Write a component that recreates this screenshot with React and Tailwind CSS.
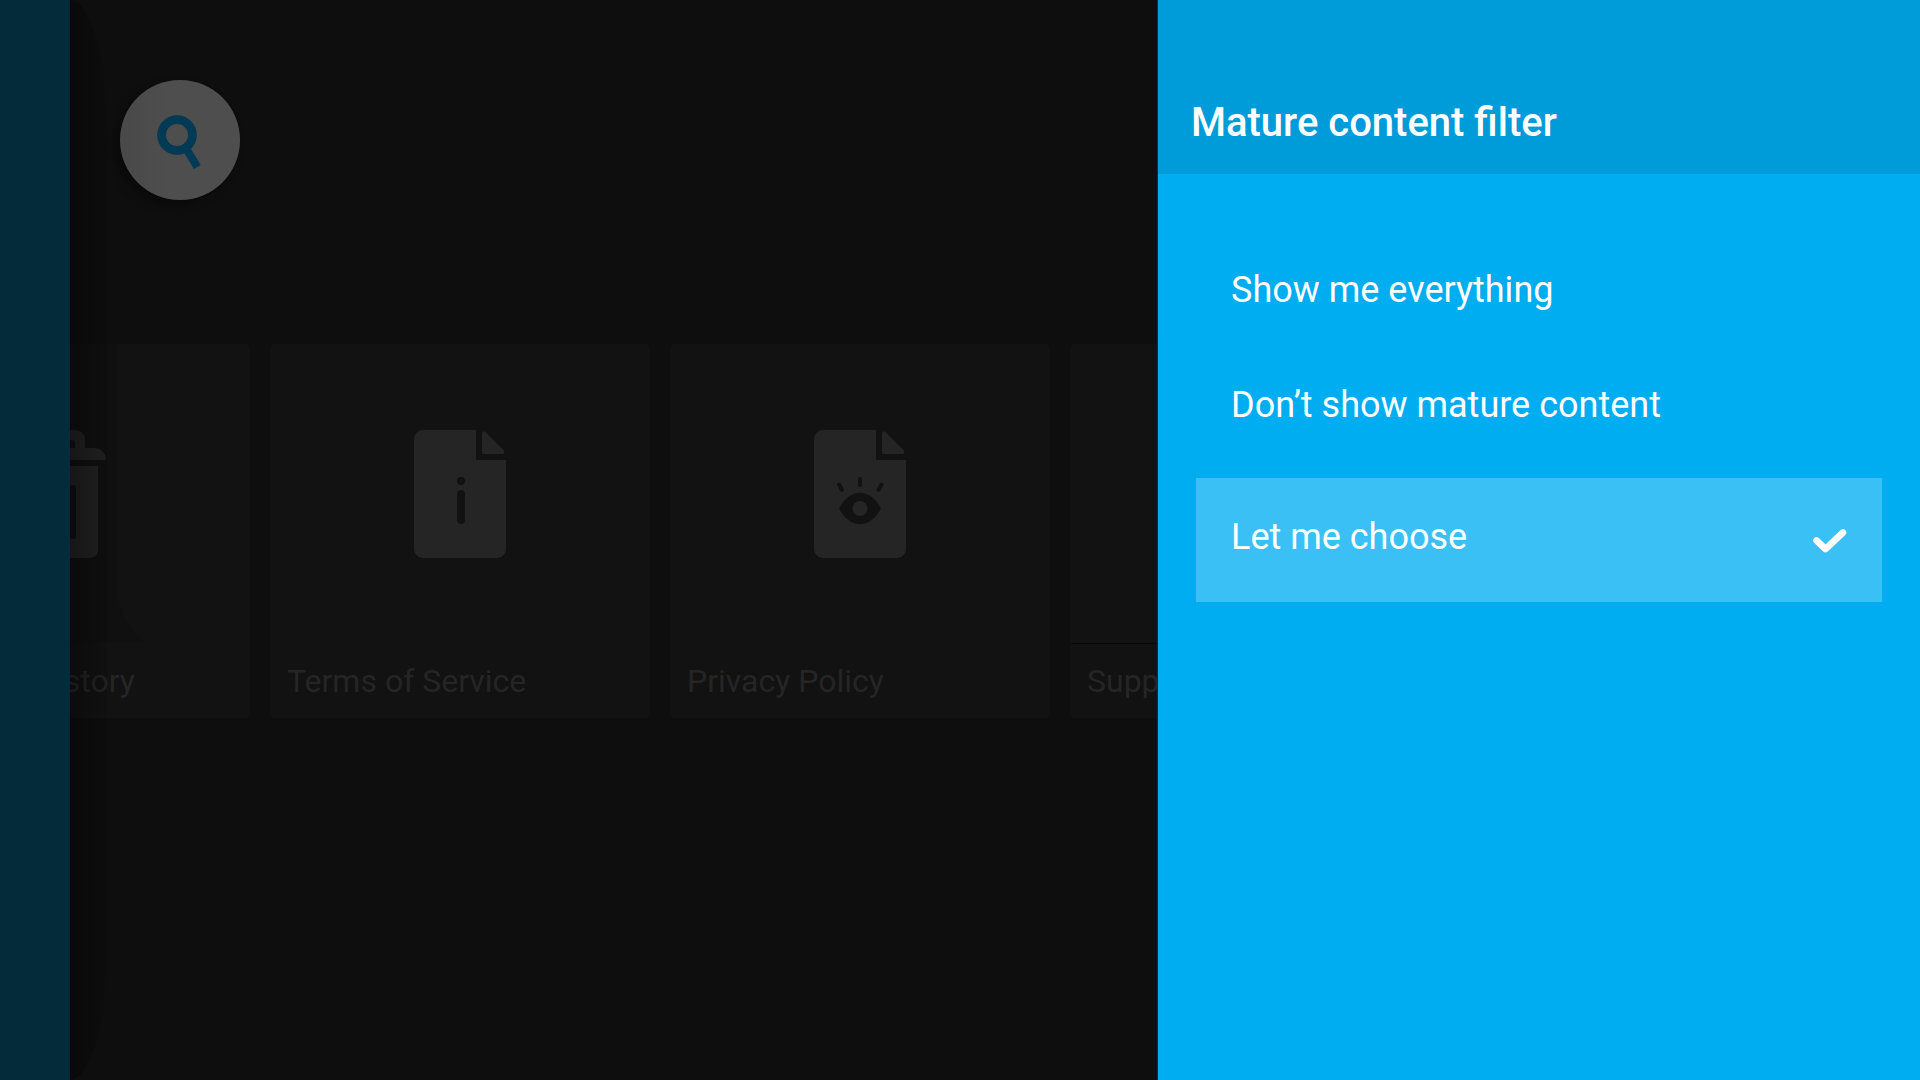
import { useState } from "react";

function SearchIcon() {
  return (
    <svg viewBox="0 0 120 120" className="size-full" aria-hidden="true">
      <circle cx="57" cy="55" r="15.4" fill="none" stroke="#003a54" strokeWidth="8.8" />
      <path d="M65.5 67.5 77.3 87" stroke="#003a54" strokeWidth="8" fill="none" />
    </svg>
  );
}

function TrashIcon() {
  return (
    <svg viewBox="0 0 92 128" className="h-32 w-[92px]" fill="#252525" aria-hidden="true">
      <path
        fillRule="evenodd"
        d="M0 30C0 23 5 18 12 18H21V9A9 9 0 0 1 30 0H62A9 9 0 0 1 71 9V18H80C87 18 92 23 92 30ZM31 18H61V13A3 3 0 0 0 58 10H34A3 3 0 0 0 31 13Z"
      />
      <path
        fillRule="evenodd"
        d="M8 36H84V120A8 8 0 0 1 76 128H16A8 8 0 0 1 8 120ZM24 58V106A3 3 0 0 0 30 106V58A3 3 0 0 0 24 58ZM56 58V106A3 3 0 0 0 62 106V58A3 3 0 0 0 56 58Z"
      />
    </svg>
  );
}

function DocumentIcon({ children }) {
  return (
    <svg viewBox="0 0 92 128" className="h-32 w-[92px]" fill="#252525" aria-hidden="true">
      <path d="M9 0H62V28.5Q62 30 63.5 30H92V119A9 9 0 0 1 83 128H9A9 9 0 0 1 0 119V9A9 9 0 0 1 9 0Z" />
      <path d="M68 4Q68 0 71.5 2L89.5 20Q91.5 24 88 24H70Q68 24 68 22Z" />
      {children}
    </svg>
  );
}

function InfoIcon() {
  return (
    <DocumentIcon>
      <circle cx="47" cy="51" r="4" fill="#121212" />
      <rect x="43" y="60" width="8" height="34" rx="4" fill="#121212" />
    </DocumentIcon>
  );
}

function EyeIcon() {
  return (
    <DocumentIcon>
      <path d="M25 78.5C36 57.5 56 57.5 67 78.5C56 99.5 36 99.5 25 78.5Z" fill="#121212" />
      <circle cx="46" cy="78.5" r="7.5" fill="#252525" />
      <path
        d="M46 49V55M25 54.5 28 60M67.5 54.5 64.5 60"
        stroke="#121212"
        strokeWidth="4"
        strokeLinecap="round"
      />
    </DocumentIcon>
  );
}

function CheckIcon() {
  return (
    <svg viewBox="0 0 34 24" className="mt-2 h-6 w-[34px]" fill="none" aria-hidden="true">
      <path d="M3.5 11.5 12.5 20 30 3.5" stroke="#fff" strokeWidth="6.6" strokeLinecap="round" strokeLinejoin="round" />
    </svg>
  );
}

function Card({ icon, label, className = "", dividerClass = "border-transparent", labelClass = "" }) {
  return (
    <button
      type="button"
      className={`flex w-[380px] shrink-0 flex-col rounded-[5px] bg-[#121212] text-left ${className}`}
    >
      <span className={`flex h-[300px] w-full items-center justify-center border-b ${dividerClass}`}>{icon}</span>
      <span className={`block px-[17px] py-[18px] text-[32px] leading-[38px] whitespace-nowrap text-[#252525] ${labelClass}`}>
        {label}
      </span>
    </button>
  );
}

const options = ["Show me everything", "Don’t show mature content", "Let me choose"];

function FilterPanel() {
  const [choice, setChoice] = useState("Let me choose");
  return (
    <aside className="w-[763px] shrink-0 border-l border-[#1f2b30] bg-[#00adf0] text-white">
      <header className="bg-[#009cd9] px-[33px] pt-[99px] pb-[27px]">
        <h1 id="filter-title" className="text-[40px] leading-[48px] font-medium">
          Mature content filter
        </h1>
      </header>
      <div role="radiogroup" aria-labelledby="filter-title" className="px-[38px] pt-[59px]">
        {options.map((option) => (
          <label
            key={option}
            className={`relative flex cursor-pointer items-start justify-between px-[35px] text-[36px] leading-[42px] ${
              choice === option ? "mt-[15px] bg-[#3bc0f5] pt-[38px] pb-[44px]" : "pt-[36px] pb-[37px]"
            }`}
          >
            <input
              type="radio"
              name="filter"
              className="sr-only"
              checked={choice === option}
              onChange={() => setChoice(option)}
            />
            {option}
            <span className="flex h-[42px] items-center">{choice === option && <CheckIcon />}</span>
          </label>
        ))}
      </div>
    </aside>
  );
}

export default function App() {
  return (
    <div className="flex min-h-screen bg-[#0e0e0e] font-['Roboto',sans-serif]">
      <nav className="w-[70px] shrink-0 bg-[#042b39]" aria-label="Main" />
      <main className="relative min-w-0 flex-1 overflow-hidden pt-20">
        <button
          type="button"
          aria-label="Search"
          className="ml-[50px] block size-[120px] rounded-full bg-linear-to-r from-[#494949] to-[#4e4e4e] to-40% shadow-[-5px_5px_10px_rgba(0,0,0,0.35)]"
        >
          <SearchIcon />
        </button>
        <section className="mt-36 flex gap-5">
          <Card icon={<TrashIcon />} label="history" className="-ml-[200px]" labelClass="w-[282px] text-right" />
          <Card icon={<InfoIcon />} label="Terms of Service" />
          <Card icon={<EyeIcon />} label="Privacy Policy" />
          <Card label="Support" dividerClass="border-[#0a0a0a]" />
        </section>
        <svg
          viewBox="0 0 76 300"
          className="pointer-events-none absolute top-[344px] left-0 h-[300px] w-[76px]"
          aria-hidden="true"
        >
          <path d="M37 0H48V255Q54 282 76 299H0V0Z" fill="#000" fillOpacity="0.08" />
        </svg>
        <div className="pointer-events-none absolute inset-y-0 left-0 w-[37px] rounded-r-[37px_130px] bg-linear-to-r from-black/35 to-black/10" />
      </main>
      <FilterPanel />
    </div>
  );
}
